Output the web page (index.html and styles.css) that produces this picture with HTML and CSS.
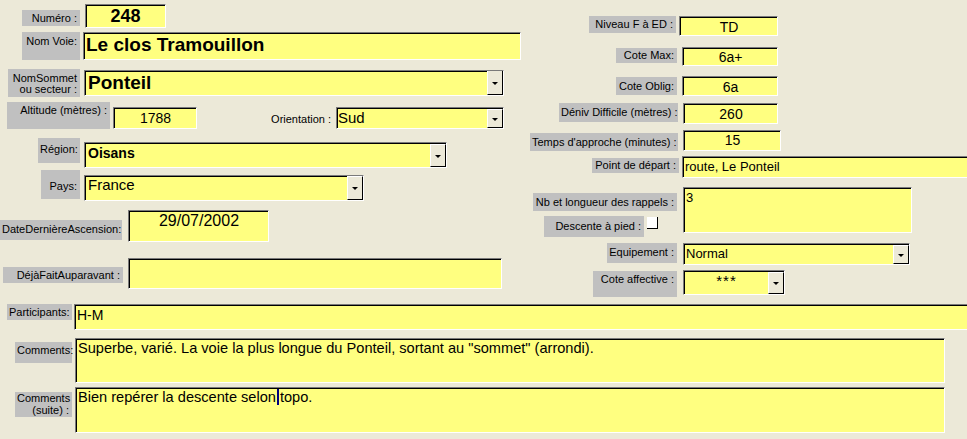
FILE: index.html
```html
<!DOCTYPE html>
<html lang="fr">
<head>
<meta charset="utf-8">
<title>Voie</title>
<link rel="stylesheet" href="styles.css">
</head>
<body>
<div class="form">
  <div class="top">
    <div class="col-left">
      <div class="row row1">
        <div class="lbl l-num">Numéro :</div>
        <div class="fld f-num">248</div>
      </div>
      <div class="row row2">
        <div class="lbl l-voie">Nom Voie:</div>
        <div class="fld f-voie">Le clos Tramouillon</div>
      </div>
      <div class="row row3">
        <div class="lbl l-sommet">NomSommet<br>ou secteur :</div>
        <div class="fld combo f-sommet"><span class="val">Ponteil</span><span class="btn"><i></i></span></div>
      </div>
      <div class="row row4">
        <div class="lbl l-alt">Altitude (mètres) :</div>
        <div class="fld f-alt">1788</div>
        <div class="plain l-orient">Orientation :</div>
        <div class="fld combo f-orient"><span class="val">Sud</span><span class="btn"><i></i></span></div>
      </div>
      <div class="row row5">
        <div class="lbl l-region">Région:</div>
        <div class="fld combo f-region"><span class="val">Oisans</span><span class="btn"><i></i></span></div>
      </div>
      <div class="row row6">
        <div class="lbl l-pays">Pays:</div>
        <div class="fld combo f-pays"><span class="val">France</span><span class="btn"><i></i></span></div>
      </div>
      <div class="row row7">
        <div class="lbl l-date">DateDernièreAscension:</div>
        <div class="fld f-date">29/07/2002</div>
      </div>
      <div class="row row8">
        <div class="lbl l-deja">DéjàFaitAuparavant :</div>
        <div class="fld f-deja"></div>
      </div>
    </div>
    <div class="col-right">
      <div class="row r1">
        <div class="lbl l-niveau">Niveau F à ED :</div>
        <div class="fld num f-niveau">TD</div>
      </div>
      <div class="row r2">
        <div class="lbl l-cmax">Cote Max:</div>
        <div class="fld num f-cmax">6a+</div>
      </div>
      <div class="row r3">
        <div class="lbl l-cobl">Cote Oblig:</div>
        <div class="fld num f-cobl">6a</div>
      </div>
      <div class="row r4">
        <div class="lbl l-deniv">Déniv Difficile (mètres) :</div>
        <div class="fld num f-deniv">260</div>
      </div>
      <div class="row r5">
        <div class="lbl l-temps">Temps d'approche (minutes) :</div>
        <div class="fld num f-temps">15</div>
      </div>
      <div class="row r6">
        <div class="lbl l-depart">Point de départ :</div>
        <div class="fld f-depart">route, Le Ponteil</div>
      </div>
      <div class="row r7">
        <div class="sub">
          <div class="lbl l-rappels">Nb et longueur des rappels :</div>
          <div class="desc-row">
            <div class="lbl l-desc">Descente à pied :</div>
            <div class="check"></div>
          </div>
        </div>
        <div class="fld f-rappels">3</div>
      </div>
      <div class="row r8">
        <div class="lbl l-equip">Equipement :</div>
        <div class="fld combo f-equip"><span class="val">Normal</span><span class="btn"><i></i></span></div>
      </div>
      <div class="row r9">
        <div class="lbl l-affect">Cote affective :</div>
        <div class="fld combo f-affect"><span class="val">***</span><span class="btn"><i></i></span></div>
      </div>
    </div>
  </div>
  <div class="bottom">
    <div class="row b1">
      <div class="lbl l-part">Participants:</div>
      <div class="fld f-part">H-M</div>
    </div>
    <div class="row b2">
      <div class="lbl l-comm">Comments:</div>
      <div class="fld f-comm">Superbe, varié. La voie la plus longue du Ponteil, sortant au "sommet" (arrondi).</div>
    </div>
    <div class="row b3">
      <div class="lbl l-suite">Comments<br>(suite) :</div>
      <div class="fld f-suite">Bien repérer la descente selon<span class="caret"></span>topo.</div>
    </div>
  </div>
</div>
</body>
</html>
```
FILE: styles.css
```css
* { box-sizing: border-box; }
html, body { margin: 0; padding: 0; }
body {
  background: #ece9d8;
  font-family: "Liberation Sans", Arial, sans-serif;
  color: #000;
  width: 967px;
  height: 439px;
  overflow: hidden;
}
.form { width: 967px; height: 439px; overflow: hidden; }
.top { display: flex; height: 304px; }
.col-left { width: 528px; flex: none; padding-top: 4px; }
.col-right { flex: none; width: 439px; padding-top: 16px; }
.row { display: flex; align-items: flex-start; flex: none; }

/* labels */
.lbl {
  background: #c0c0c0;
  font-size: 11px;
  line-height: 13px;
  text-align: right;
  padding: 0 3px 0 2px;
  white-space: nowrap;
  flex: none;
}
.plain {
  font-size: 11px;
  line-height: 13px;
  text-align: right;
  white-space: nowrap;
  flex: none;
}

/* fields */
.fld {
  background: #ffff80;
  border-top: 1px solid #7a7a7a;
  border-left: 1px solid #7a7a7a;
  border-right: 1px solid #fff;
  border-bottom: 1px solid #fff;
  box-shadow: inset 1px 1px 0 #000;
  font-size: 14px;
  line-height: 16px;
  padding: 1px 2px 0 3px;
  white-space: nowrap;
  overflow: hidden;
  flex: none;
}
.num { text-align: center; padding-top: 2px; }
.combo { display: flex; align-items: stretch; padding-right: 0; padding-bottom: 0; }
.combo .val { flex: 1; }
.btn {
  width: 16px;
  flex: none;
  background: #ece9d8;
  border-top: 1px solid #fff;
  border-left: 1px solid #fff;
  border-right: 1px solid #000;
  border-bottom: 1px solid #000;
  margin: -1px 0 0 0;
  display: flex;
  align-items: center;
  justify-content: center;
}
.btn i {
  display: block;
  width: 0; height: 0;
  border-left: 3px solid transparent;
  border-right: 3px solid transparent;
  border-top: 3px solid #000;
  margin-top: 1px;
}

/* left column */
.row1 { height: 28px; }
.l-num { margin: 6px 0 0 22px; width: 58px; height: 16px; padding-top: 2px; }
.f-num { margin-left: 5px; width: 81px; height: 24px; font-size: 18px; font-weight: bold; line-height: 22px; text-align: center; padding: 0; }

.row2 { height: 37px; }
.l-voie { margin-left: 22px; width: 58px; height: 28px; padding-top: 3px; }
.f-voie { margin-left: 3px; width: 438px; height: 28px; font-size: 19px; font-weight: bold; line-height: 24px; padding: 0 2px 0 2px; }

.row3 { height: 33px; }
.l-sommet { margin-left: 8px; width: 72px; height: 28px; padding-top: 4px; line-height: 11px; }
.f-sommet { margin: 1px 0 0 4px; width: 420px; height: 26px; font-size: 19px; font-weight: bold; line-height: 24px; padding-left: 3px; padding-top: 0; }

.row4 { height: 36px; }
.l-alt { margin-left: 7px; width: 103px; height: 27px; padding-top: 2px; }
.f-alt { margin: 5px 0 0 3px; width: 84px; height: 22px; text-align: center; padding-top: 2px; }
.l-orient { margin: 11px 0 0 70px; width: 64px; }
.f-orient { margin: 5px 0 0 5px; width: 168px; height: 22px; font-size: 15px; padding-top: 2px; padding-left: 1px; }

.row5 { height: 32px; }
.l-region { margin-left: 38px; width: 42px; height: 25px; padding-top: 5px; }
.f-region { margin: 4px 0 0 4px; width: 363px; height: 26px; font-weight: bold; padding-top: 2px; }

.row6 { height: 40px; }
.l-pays { margin-left: 41px; width: 39px; height: 29px; padding-top: 10px; }
.f-pays { margin: 5px 0 0 4px; width: 280px; height: 26px; font-size: 15px; padding-top: 1px; }

.row7 { height: 48px; }
.l-date { margin: 10px 0 0 0; width: 122px; height: 20px; padding-top: 3px; }
.f-date { margin-left: 6px; width: 141px; height: 32px; font-size: 16px; line-height: 18px; text-align: center; padding-top: 1px; }

.row8 { height: 46px; }
.l-deja { margin: 9px 0 0 3px; width: 120px; height: 16px; padding-top: 2px; }
.f-deja { margin-left: 5px; width: 374px; height: 31px; }

/* right column */
.r1 { height: 31px; }
.l-niveau { margin-left: 61px; width: 87px; height: 17px; padding-top: 2px; }
.f-niveau { margin-left: 3px; width: 99px; height: 20px; }

.r2 { height: 29px; }
.l-cmax { margin: 1px 0 0 88px; width: 61px; height: 15px; padding-top: 1px; }
.f-cmax { margin-left: 5px; width: 96px; height: 19px; padding-top: 1px; }

.r3 { height: 27px; }
.l-cobl { margin: 1px 0 0 88px; width: 61px; height: 18px; padding-top: 3px; }
.f-cobl { margin-left: 5px; width: 96px; height: 20px; }

.r4 { height: 27px; }
.l-deniv { margin-left: 31px; width: 119px; height: 19px; padding-top: 3px; }
.f-deniv { margin-left: 5px; width: 95px; height: 21px; }

.r5 { height: 26px; }
.l-temps { margin: 3px 0 0 2px; width: 148px; height: 18px; padding-top: 3px; }
.f-temps { margin-left: 5px; width: 98px; height: 21px; padding-top: 1px; }

.r6 { height: 31px; }
.l-depart { margin: 2px 0 0 64px; width: 87px; height: 15px; padding-top: 1px; }
.f-depart { margin-left: 3px; width: 300px; height: 22px; font-size: 13px; padding-top: 2px; padding-left: 2px; }

.r7 { height: 56px; }
.sub { width: 155px; flex: none; }
.l-rappels { margin: 6px 0 0 5px; width: 144px; height: 18px; padding-top: 3px; }
.desc-row { display: flex; align-items: flex-start; margin-top: 5px; }
.l-desc { margin-left: 16px; width: 100px; height: 21px; padding-top: 4px; }
.check {
  margin: 1px 0 0 3px;
  width: 11px; height: 12px;
  background: #fff;
  border-right: 1px solid #000;
  border-bottom: 1px solid #000;
  flex: none;
}
.f-rappels { width: 229px; height: 46px; font-size: 13px; padding-top: 2px; padding-left: 2px; }

.r8 { height: 27px; }
.l-equip { margin-left: 79px; width: 70px; height: 20px; padding-top: 3px; }
.f-equip { margin-left: 6px; width: 227px; height: 22px; font-size: 13px; padding-top: 2px; padding-left: 2px; }

.r9 { height: 30px; }
.l-affect { margin: 1px 0 0 65px; width: 84px; height: 26px; padding-top: 2px; }
.f-affect { margin-left: 6px; width: 102px; height: 25px; padding-top: 2px; }
.f-affect .val { text-align: center; font-size: 15px; letter-spacing: 1px; padding-right: 2px; }

/* bottom */
.b1 { height: 33px; }
.l-part { margin-left: 7px; width: 65px; height: 16px; padding-top: 2px; }
.f-part { margin-left: 2px; width: 900px; height: 26px; padding-top: 2px; padding-left: 2px; }

.b2 { height: 49px; }
.l-comm { margin: 5px 0 0 15px; width: 57px; height: 21px; padding-top: 2px; }
.f-comm { margin: 1px 0 0 3px; width: 870px; height: 45px; font-size: 14.6px; padding-top: 1px; padding-left: 2px; }

.b3 { height: 53px; }
.l-suite { margin: 6px 0 0 15px; width: 57px; height: 25px; padding-top: 0; line-height: 12px; }
.f-suite { margin: 1px 0 0 3px; width: 870px; height: 46px; font-size: 14.6px; padding-top: 1px; padding-left: 2px; }
.caret {
  display: inline-block;
  width: 2px;
  height: 16px;
  background: #000080;
  margin: 0 1px 0 1px;
  vertical-align: top;
}
```
